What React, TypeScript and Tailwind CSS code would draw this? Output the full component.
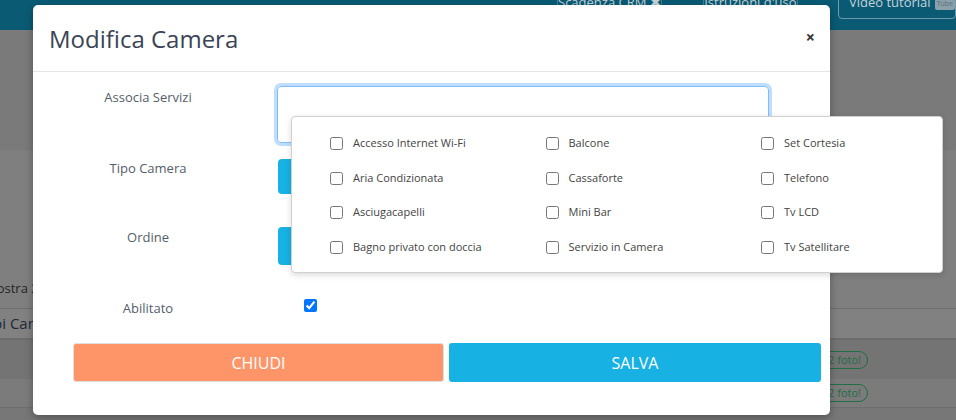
import React from "react";

const servizi = [
  ["Accesso Internet Wi-Fi", "Balcone", "Set Cortesia"],
  ["Aria Condizionata", "Cassaforte", "Telefono"],
  ["Asciugacapelli", "Mini Bar", "Tv LCD"],
  ["Bagno privato con doccia", "Servizio in Camera", "Tv Satellitare"],
];

function TopBar() {
  return (
    <div className="h-[30px] shrink-0 bg-[#0a5a74] flex items-start text-[13px] text-[#c5d2d8] whitespace-nowrap">
      <div className="ml-[557px] w-[108px] h-[24px] -mt-[7px] border-x border-[#3f7d92] flex items-start justify-center">
        Scadenza CRM ✖
      </div>
      <div className="ml-[41px] w-[116px] h-[24px] -mt-[7px] border-x border-[#3f7d92] flex items-start justify-center">
        Istruzioni d'uso
      </div>
      <div className="ml-[40px] flex-1 h-[27px] -mt-[8px] border border-[#6f99aa] rounded-[4px] pl-[10px] flex items-start gap-1">
        Video tutorial
        <span className="mt-[6px] text-[7px] bg-[#8aa0aa] text-[#5a6e78] rounded-[2px] px-[2px]">Tube</span>
      </div>
    </div>
  );
}

function Badge() {
  return (
    <span className="border border-[#1f6e46] text-[#1f6e46] rounded-full px-[6px] text-[11px] leading-[16px]">
      2 foto!
    </span>
  );
}

function Background() {
  return (
    <div className="flex flex-col h-full">
      <TopBar />
      <div className="h-[120px] shrink-0 bg-[#7a7a7a]" />
      <div className="flex-1 bg-[#7f7f7f] flex flex-col">
        <div className="h-[128px] shrink-0" />
        <div className="shrink-0 text-[13px] text-[#262626] -ml-[15px] leading-[20px] whitespace-nowrap">Mostra 2</div>
        <div className="h-[11px] shrink-0 border-b border-[#6e6e6e]" />
        <div className="h-[31px] shrink-0 bg-[#818181] border-b-2 border-[#6c6c6c] text-[15px] text-[#1e2a36] -ml-[19px] leading-[28px] flex whitespace-nowrap">
          Tipi Camera
        </div>
        <div className="h-[39px] shrink-0 bg-[#747474] flex items-center justify-end pr-[88px]">
          <Badge />
        </div>
        <div className="h-[29px] shrink-0 bg-[#7b7b7b] border-b border-[#6e6e6e] flex items-center justify-end pr-[88px]">
          <Badge />
        </div>
        <div className="flex-1 bg-[#777777]" />
      </div>
    </div>
  );
}

function Dropdown() {
  return (
    <div className="absolute left-[291px] top-[116px] w-[652px] h-[157px] bg-white border border-[#d0d0d0] rounded-[4px] shadow-[0_2px_6px_rgba(0,0,0,0.15)] pt-[17px] pl-[38px] overflow-hidden">
      {servizi.map((row, i) => (
        <div key={i} className="flex h-[34.5px]">
          {row.map((s) => (
            <label key={s} className="w-[215.5px] shrink-0 flex items-start gap-[10px] text-[11px] text-[#444] leading-[18px] whitespace-nowrap">
              <input type="checkbox" className="m-0 mt-[3px] w-[13px] h-[13px] shrink-0" />
              {s}
            </label>
          ))}
        </div>
      ))}
    </div>
  );
}

function Modal() {
  return (
    <div className="absolute left-[33px] top-[5px] w-[797px] h-[410px] bg-white rounded-[5px] shadow-[0_3px_9px_rgba(0,0,0,0.3)]">
      <div className="h-[67px] border-b border-[#e5e5e5] flex items-center justify-between pl-[16px] pr-[15px]">
        <h4 className="text-[24px] text-[#3a4456] leading-none pt-[2px]">Modifica Camera</h4>
        <span className="text-[16px] font-bold text-[#333] leading-none -mt-[2px]">×</span>
      </div>
      <div className="flex flex-col text-[13px] text-[#555d6b]">
        <div className="flex mt-[14px] h-[57px]">
          <div className="w-[230px] text-center leading-[20px] pt-[1px]">Associa Servizi</div>
          <div className="ml-[14px] w-[492px] h-[57px] border border-[#80bdff] rounded-[4px] shadow-[0_0_0_3px_rgba(0,123,255,0.25)]" />
        </div>
        <div className="flex mt-[16px] h-[35px]">
          <div className="w-[230px] text-center leading-[20px] -mt-[1px]">Tipo Camera</div>
          <div className="ml-[15px] w-[491px] h-[35px] bg-[#17b1e4] rounded-[4px]" />
        </div>
        <div className="flex mt-[33px] h-[38px]">
          <div className="w-[230px] text-center leading-[20px]">Ordine</div>
          <div className="ml-[15px] w-[491px] h-[38px] bg-[#17b1e4] rounded-[4px]" />
        </div>
        <div className="flex mt-[33px] h-[20px]">
          <div className="w-[230px] text-center leading-[20px]">Abilitato</div>
          <input type="checkbox" defaultChecked className="ml-[41px] mt-[1px] w-[13px] h-[13px] m-0" />
        </div>
        <div className="flex gap-[5px] mt-[25px] ml-[40px] h-[39px] text-[16px] text-white">
          <button className="w-[371px] bg-[#fe9568] border border-[#e0e0e0] rounded-[3px]">CHIUDI</button>
          <button className="w-[372px] bg-[#17b1e4] rounded-[3px]">SALVA</button>
        </div>
      </div>
    </div>
  );
}

export default function App() {
  return (
    <div
      className="relative w-[956px] h-[420px] overflow-hidden"
      style={{ fontFamily: '"Open Sans", "Noto Sans", sans-serif' }}
    >
      <Background />
      <Modal />
      <Dropdown />
    </div>
  );
}
